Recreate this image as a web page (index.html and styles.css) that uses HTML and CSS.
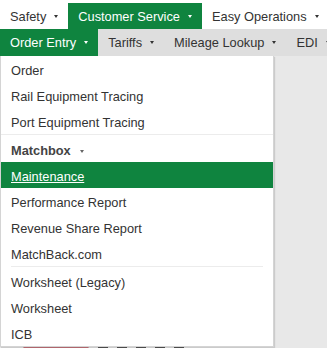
FILE: index.html
```html
<!DOCTYPE html>
<html lang="en">
<head>
    <meta charset="UTF-8">
    <meta name="viewport" content="width=device-width, initial-scale=1.0">
    <title>Customer Service Menu</title>
    <link rel="stylesheet" href="styles.css">
</head>
<body>
    <nav class="topnav">
        <a class="nav-item">Safety <span class="caret"></span></a>
        <a class="nav-item active">Customer Service <span class="caret"></span></a>
        <a class="nav-item">Easy Operations <span class="caret"></span></a>
    </nav>

    <nav class="subnav">
        <a class="nav-item active">Order Entry <span class="caret"></span></a>
        <a class="nav-item">Tariffs <span class="caret"></span></a>
        <a class="nav-item">Mileage Lookup <span class="caret"></span></a>
        <a class="nav-item">EDI <span class="caret"></span></a>
    </nav>

    <div class="main">
        <ul class="dropdown">
            <li><a>Order</a></li>
            <li><a>Rail Equipment Tracing</a></li>
            <li><a>Port Equipment Tracing</a></li>
            <li class="divider"></li>
            <li class="heading">Matchbox <span class="caret"></span></li>
            <li class="selected"><a>Maintenance</a></li>
            <li><a>Performance Report</a></li>
            <li><a>Revenue Share Report</a></li>
            <li><a>MatchBack.com</a></li>
            <li class="divider inset"></li>
            <li><a>Worksheet (Legacy)</a></li>
            <li><a>Worksheet</a></li>
            <li><a>ICB</a></li>
        </ul>

        <div class="toolbar">
            <span class="btn-red"></span>
            <span class="tool"></span>
            <span class="tool"></span>
            <span class="tool"></span>
            <span class="tool"></span>
            <span class="tool"></span>
        </div>
    </div>
</body>
</html>
```

FILE: styles.css
```css
html, body {
    overflow: hidden;
}

body {
    font-family: "Liberation Sans", Arial, sans-serif;
    font-size: 12.8px;
    color: #333;
    background-color: #e8e8e8;
    margin: 0;
    padding: 0;
    height: 348px;
}

.topnav {
    display: flex;
    align-items: flex-end;
    height: 29px;
    background-color: #ffffff;
}

.subnav {
    display: flex;
    height: 27px;
    background-color: #dedede;
}

.nav-item {
    display: flex;
    align-items: center;
    padding: 0 10px;
    height: 26px;
    color: #333;
    white-space: nowrap;
}

.subnav .nav-item {
    height: 27px;
}

.nav-item.active {
    background-color: #0f843f;
    color: #ffffff;
}

.caret {
    display: inline-block;
    width: 0;
    height: 0;
    margin-left: 8px;
    border-top: 3px solid currentColor;
    border-left: 2.5px solid transparent;
    border-right: 2.5px solid transparent;
}

.main {
    position: relative;
}

.dropdown {
    position: absolute;
    top: 0;
    left: 0;
    width: 272px;
    margin: 0;
    padding: 0;
    list-style: none;
    background-color: #ffffff;
    border: 1px solid #d4d4d4;
    border-top: none;
    box-shadow: 1px 1px 1px rgba(0, 0, 0, 0.12);
    z-index: 10;
}

.dropdown li a,
.dropdown .heading {
    display: block;
    height: 23px;
    line-height: 23px;
    padding: 3px 10px 0;
    color: #333;
}

.dropdown .heading {
    font-weight: bold;
    color: #444;
}

.dropdown .heading .caret {
    margin-left: 6px;
    color: #666;
    vertical-align: middle;
}

.dropdown .selected a {
    background-color: #0f843f;
    color: #ffffff;
    text-decoration: underline;
}

.divider {
    height: 1px;
    margin-bottom: 1px;
    background-color: #ececec;
}

.divider.inset {
    margin: 0 10px 1px;
}

.toolbar {
    display: flex;
    gap: 9px;
    padding: 290px 0 0 23px;
}

.btn-red {
    width: 66px;
    height: 20px;
    background-color: #c8737c;
    border-radius: 3px;
}

.tool {
    width: 10px;
    height: 10px;
    background-color: #555;
}
```
